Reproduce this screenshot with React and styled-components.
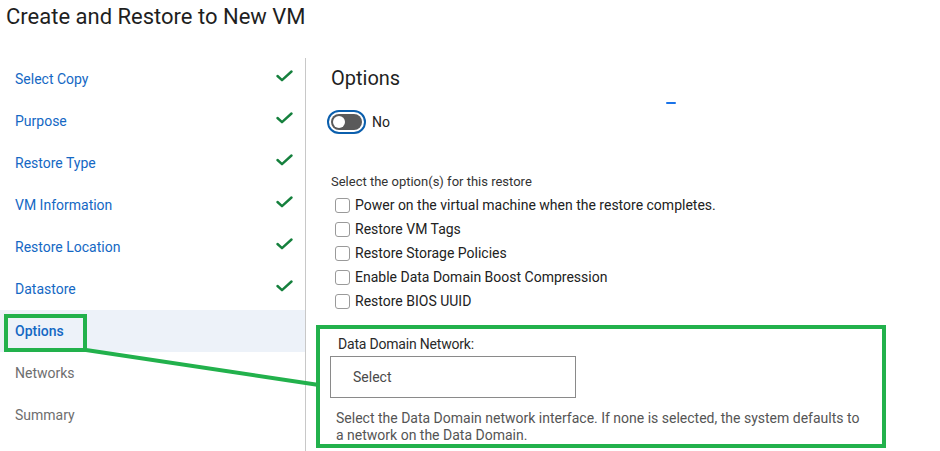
import React, { useState } from 'react';
import styled, { createGlobalStyle } from 'styled-components';

const GlobalStyle = createGlobalStyle`
  html, body {
    margin: 0;
    padding: 0;
    background: #fff;
  }
  body {
    font-family: Roboto, "Liberation Sans", Arial, sans-serif;
    color: #222;
  }
`;

const steps = [
  { label: 'Select Copy', state: 'done' },
  { label: 'Purpose', state: 'done' },
  { label: 'Restore Type', state: 'done' },
  { label: 'VM Information', state: 'done' },
  { label: 'Restore Location', state: 'done' },
  { label: 'Datastore', state: 'done' },
  { label: 'Options', state: 'active' },
  { label: 'Networks', state: 'todo' },
  { label: 'Summary', state: 'todo' },
];

const restoreOptions = [
  'Power on the virtual machine when the restore completes.',
  'Restore VM Tags',
  'Restore Storage Policies',
  'Enable Data Domain Boost Compression',
  'Restore BIOS UUID',
];

const CheckIcon = () => (
  <svg width="17" height="12" viewBox="0 0 17 12" fill="none">
    <path d="M1.5 6 L6 10.2 L15.5 1.5" stroke="#15803d" strokeWidth="2.4" strokeLinecap="round" strokeLinejoin="round" />
  </svg>
);

const App = () => {
  const [enabled, setEnabled] = useState(false);
  const [checked, setChecked] = useState({});

  return (
    <>
      <GlobalStyle />
      <Page>
        <Title>Create and Restore to New VM</Title>
        <Wizard>
          <StepList>
            {steps.map((s) => (
              <Step key={s.label} $state={s.state}>
                <span>{s.label}</span>
                {s.state === 'done' && <CheckIcon />}
              </Step>
            ))}
          </StepList>
          <Content>
            <SectionTitle>Options</SectionTitle>
            <ToggleRow>
              <Toggle onClick={() => setEnabled(!enabled)} $on={enabled}>
                <Track $on={enabled}>
                  <Knob $on={enabled} />
                </Track>
              </Toggle>
              <ToggleLabel>{enabled ? 'Yes' : 'No'}</ToggleLabel>
            </ToggleRow>
            <OptionsHint>Select the option(s) for this restore</OptionsHint>
            <OptionList>
              {restoreOptions.map((o) => (
                <OptionRow key={o}>
                  <Box
                    type="checkbox"
                    checked={!!checked[o]}
                    onChange={() => setChecked({ ...checked, [o]: !checked[o] })}
                  />
                  {o}
                </OptionRow>
              ))}
            </OptionList>
            <NetworkField>
              <FieldLabel>Data Domain Network:</FieldLabel>
              <SelectBox>Select</SelectBox>
              <HelpText>
                Select the Data Domain network interface. If none is selected, the system defaults to
                a network on the Data Domain.
              </HelpText>
            </NetworkField>
          </Content>
        </Wizard>

        <Spinner />
        <Callout $x={4} $y={314} $w={83} $h={38} />
        <Callout $x={316} $y={325} $w={570} $h={123} />
        <Connector width="940" height="451">
          <line x1="86" y1="350" x2="319" y2="385" stroke="#22b14c" strokeWidth="4" />
        </Connector>
      </Page>
    </>
  );
};

const Page = styled.div`
  position: relative;
  width: 940px;
  height: 451px;
  overflow: hidden;
`;

const Title = styled.h1`
  margin: 0;
  padding: 2px 0 0 6px;
  height: 55px;
  box-sizing: border-box;
  font-size: 22px;
  line-height: 30px;
  font-weight: 400;
  color: #1f1f1f;
`;

const Wizard = styled.div`
  display: flex;
  align-items: stretch;
  height: 396px;
  padding-top: 3px;
`;

const StepList = styled.ul`
  list-style: none;
  margin: 0;
  padding: 0;
  width: 305px;
  flex-shrink: 0;
  border-right: 1px solid #c8c8c8;
`;

const Step = styled.li`
  display: flex;
  align-items: center;
  justify-content: space-between;
  height: 42px;
  padding: 0 12px 0 15px;
  box-sizing: border-box;
  font-size: 14px;
  color: ${(p) => (p.$state === 'todo' ? '#6e6e6e' : '#1468c4')};
  font-weight: ${(p) => (p.$state === 'active' ? 500 : 400)};
  background: ${(p) => (p.$state === 'active' ? '#edf2f9' : 'transparent')};

  svg {
    margin-top: -7px;
  }
`;

const Content = styled.div`
  flex: 1;
  padding: 6px 0 0 25px;
  display: flex;
  flex-direction: column;
`;

const SectionTitle = styled.h2`
  margin: 0;
  font-size: 20px;
  line-height: 28px;
  font-weight: 400;
  color: #1f1f1f;
`;

const ToggleRow = styled.div`
  display: flex;
  align-items: center;
  gap: 6px;
  margin: 18px 0 0 -4px;
`;

const Toggle = styled.button`
  width: 39px;
  height: 24px;
  padding: 2px;
  box-sizing: border-box;
  border: 2px solid #0b5fad;
  border-radius: 12px;
  background: #fff;
  cursor: pointer;
  display: flex;
`;

const Track = styled.span`
  flex: 1;
  border-radius: 8px;
  background: ${(p) => (p.$on ? '#0b6bcb' : '#5a5a5a')};
  display: flex;
  align-items: center;
  justify-content: ${(p) => (p.$on ? 'flex-end' : 'flex-start')};
  padding: 0 2px;
`;

const Knob = styled.span`
  width: 12px;
  height: 12px;
  border-radius: 50%;
  background: #fff;
`;

const ToggleLabel = styled.span`
  font-size: 14px;
  color: #222;
`;

const OptionsHint = styled.div`
  margin-top: 39px;
  font-size: 13px;
  line-height: 17px;
  color: #333;
`;

const OptionList = styled.div`
  display: flex;
  flex-direction: column;
  margin-top: 3px;
`;

const OptionRow = styled.label`
  display: flex;
  align-items: center;
  gap: 5px;
  height: 24px;
  padding-left: 4px;
  font-size: 14px;
  color: #222;
`;

const Box = styled.input`
  appearance: none;
  margin: 0;
  width: 15px;
  height: 15px;
  border: 1px solid #9a9a9a;
  border-radius: 3px;
  background: #fff;

  &:checked {
    background: #0b6bcb;
    border-color: #0b6bcb;
  }
`;

const NetworkField = styled.div`
  display: flex;
  flex-direction: column;
  align-items: flex-start;
  margin-top: 22px;
  padding-left: 7px;
`;

const FieldLabel = styled.div`
  font-size: 14px;
  line-height: 18px;
  color: #2a2a2a;
  letter-spacing: -0.2px;
`;

const SelectBox = styled.div`
  margin: 3px 0 0 -8px;
  width: 246px;
  height: 42px;
  box-sizing: border-box;
  border: 1px solid #8a8a8a;
  padding: 0 22px;
  display: flex;
  align-items: center;
  font-size: 14px;
  color: #4a4a4a;
`;

const HelpText = styled.p`
  margin: 12px 0 0 -2px;
  width: 530px;
  font-size: 14px;
  line-height: 17px;
  color: #555;
`;

const Spinner = styled.span`
  position: absolute;
  left: 666px;
  top: 102px;
  width: 10px;
  height: 2px;
  border-radius: 1px;
  background: #1a73e8;
`;

const Callout = styled.div`
  position: absolute;
  left: ${(p) => p.$x}px;
  top: ${(p) => p.$y}px;
  width: ${(p) => p.$w}px;
  height: ${(p) => p.$h}px;
  box-sizing: border-box;
  border: 4px solid #22b14c;
  pointer-events: none;
`;

const Connector = styled.svg`
  position: absolute;
  left: 0;
  top: 0;
  pointer-events: none;
`;

export default App;
